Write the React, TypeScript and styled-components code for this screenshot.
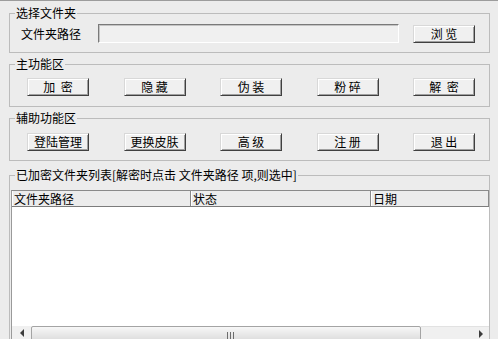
import React from "react";
import styled, { createGlobalStyle } from "styled-components";

const GlobalStyle = createGlobalStyle`
  html, body {
    margin: 0;
    padding: 0;
    background: #ececec;
  }
  body {
    font-family: "Noto Sans CJK SC", "Noto Sans", sans-serif;
    font-size: 12px;
    color: #000;
  }
`;

const Window = styled.div`
  width: 498px;
  height: 339px;
  box-sizing: border-box;
  overflow: hidden;
  border-top: 1px solid #9c9c9c;
  padding: 12px 8px 0 9px;
  display: flex;
  flex-direction: column;
`;

// group box with its caption sitting on the top border
const Group = styled.section<{ $top: number; $pad: string }>`
  position: relative;
  margin-top: ${(p) => p.$top}px;
  padding: ${(p) => p.$pad};
  border: 1px solid #bcbcbc;
  flex-shrink: 0;
`;

const Caption = styled.span`
  position: absolute;
  top: -8px;
  left: 5px;
  padding: 0 1px;
  background: #ececec;
  font-size: 12px;
  line-height: 14px;
  white-space: nowrap;
`;

const PathRow = styled.div`
  display: flex;
  align-items: center;
  height: 19px;
`;

const Label = styled.span`
  width: 60px;
  line-height: 14px;
  white-space: nowrap;
`;

const PathInput = styled.input`
  box-sizing: border-box;
  width: 301px;
  height: 19px;
  margin: 0 0 0 17px;
  padding: 0 3px;
  background: #f0f0f0;
  border: 1px solid;
  border-color: #7a7a7a #ffffff #ffffff #7a7a7a;
  box-shadow: inset 1px 1px 0 #c4c4c4;
  outline: none;
`;

const Button = styled.button<{ $ml?: number }>`
  box-sizing: border-box;
  width: 62px;
  height: 18px;
  margin: 0 0 0 ${(p) => p.$ml ?? 0}px;
  padding: 0;
  background: #f0f0f0;
  border: 1px solid;
  border-color: #d8d8d8 #404040 #404040 #d8d8d8;
  box-shadow: inset 1px 1px 0 #ffffff, inset -1px -1px 0 #a0a0a0;
  font-family: "Noto Sans CJK SC", "Noto Sans", sans-serif;
  font-size: 12px;
  line-height: 14px;
  color: #000;
  white-space: pre;
`;

const ButtonRow = styled.div`
  display: flex;
  justify-content: space-between;
  height: 18px;
`;

const ListView = styled.div`
  display: flex;
  flex-direction: column;
  border-top: 1px solid #8a8a8a;
  border-left: 1px solid #9a9a9a;
  background: #ffffff;
`;

const Header = styled.div`
  display: flex;
  height: 15px;
  background: #ececec;
  border-bottom: 1px solid #7c7c7c;
`;

const HeaderCell = styled.div<{ $w?: number }>`
  box-sizing: border-box;
  ${(p) => (p.$w ? `width: ${p.$w}px;` : "flex: 1;")}
  padding-left: 2px;
  line-height: 15px;
  border-right: 1px solid #8a8a8a;
  box-shadow: inset 1px 0 0 #ffffff;
  white-space: nowrap;
`;

const Body = styled.div`
  height: 119px;
  background: #ffffff;
`;

const HScroll = styled.div`
  display: flex;
  height: 17px;
  background: #f0f0f0;
`;

const ArrowBox = styled.div<{ $w: number }>`
  width: ${(p) => p.$w}px;
  display: flex;
  align-items: center;
  justify-content: center;
  padding-bottom: 3px;
`;

const Arrow = styled.div<{ $dir: "left" | "right" }>`
  width: 0;
  height: 0;
  border-top: 4px solid transparent;
  border-bottom: 4px solid transparent;
  ${(p) =>
    p.$dir === "left"
      ? "border-right: 4px solid #3c3c3c;"
      : "border-left: 4px solid #3c3c3c;"}
`;

const Thumb = styled.div`
  box-sizing: border-box;
  width: 390px;
  border: 1px solid #a4a4a4;
  border-radius: 2px;
  background: linear-gradient(#f7f7f7, #e8e8e8 50%, #d9d9d9);
  display: flex;
  justify-content: center;
  padding: 5px 0 0 8px;
  gap: 2px;
`;

const Grip = styled.span`
  width: 1px;
  height: 7px;
  background: #6c6c6c;
`;

const Track = styled.div`
  flex: 1;
  display: flex;
  justify-content: flex-end;
  border-top: 1px solid #e2e2e2;
`;

export default function App() {
  return (
    <>
      <GlobalStyle />
      <Window>
        <Group $top={0} $pad="10px 14px 9px 11px">
          <Caption>选择文件夹</Caption>
          <PathRow>
            <Label>文件夹路径</Label>
            <PathInput readOnly />
            <Button $ml={14}>浏 览</Button>
          </PathRow>
        </Group>

        <Group $top={11} $pad="13px 14px 10px 17px">
          <Caption>主功能区</Caption>
          <ButtonRow>
            <Button>加  密</Button>
            <Button>隐 藏</Button>
            <Button>伪 装</Button>
            <Button>粉 碎</Button>
            <Button>解  密</Button>
          </ButtonRow>
        </Group>

        <Group $top={11} $pad="14px 14px 9px 17px">
          <Caption>辅助功能区</Caption>
          <ButtonRow>
            <Button>登陆管理</Button>
            <Button>更换皮肤</Button>
            <Button>高 级</Button>
            <Button>注 册</Button>
            <Button>退 出</Button>
          </ButtonRow>
        </Group>

        <Group $top={14} $pad="14px 0 0 1px">
          <Caption>已加密文件夹列表[解密时点击 文件夹路径 项,则选中]</Caption>
          <ListView>
            <Header>
              <HeaderCell $w={179}>文件夹路径</HeaderCell>
              <HeaderCell $w={180}>状态</HeaderCell>
              <HeaderCell>日期</HeaderCell>
            </Header>
            <Body />
            <HScroll>
              <ArrowBox $w={19}>
                <Arrow $dir="left" />
              </ArrowBox>
              <Thumb>
                <Grip />
                <Grip />
                <Grip />
              </Thumb>
              <Track>
                <ArrowBox $w={17}>
                  <Arrow $dir="right" />
                </ArrowBox>
              </Track>
            </HScroll>
          </ListView>
        </Group>
      </Window>
    </>
  );
}
